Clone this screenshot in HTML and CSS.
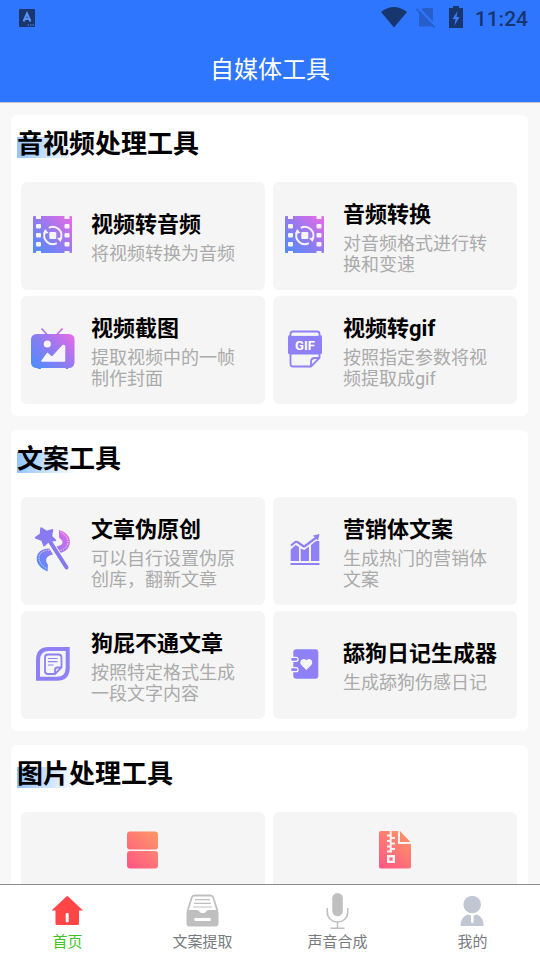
FILE: index.html
```html
<!DOCTYPE html>
<html lang="zh-CN">
<head>
<meta charset="utf-8">
<meta name="viewport" content="width=device-width, initial-scale=1">
<title>自媒体工具</title>
<link rel="stylesheet" href="styles.css">
</head>
<body>
<svg class="defs" aria-hidden="true">
  <defs>
    <linearGradient id="violet" x1="0" y1="44" x2="44" y2="0" gradientUnits="userSpaceOnUse">
      <stop offset="0.1" stop-color="#4d8dff"/>
      <stop offset="0.5" stop-color="#8f7bf0"/>
      <stop offset="0.9" stop-color="#e36be8"/>
    </linearGradient>
    <linearGradient id="coral" x1="6" y1="40" x2="38" y2="3" gradientUnits="userSpaceOnUse">
      <stop offset="0" stop-color="#ff5585"/>
      <stop offset="1" stop-color="#ff9a64"/>
    </linearGradient>
    <symbol id="film" viewBox="0 0 44 44">
      <rect x="3" y="2" width="39" height="37" rx="1" fill="url(#violet)"/>
      <g fill="#f5f5f5">
        <rect x="6" y="2" width="5" height="3"/><rect x="6" y="10" width="5" height="4.5" rx="1"/><rect x="6" y="19" width="5" height="4.5" rx="1"/><rect x="6" y="28" width="5" height="4.5" rx="1"/><rect x="6" y="37" width="5" height="2"/>
        <rect x="34.500" y="2" width="5" height="3"/><rect x="34.500" y="10" width="5" height="4.5" rx="1"/><rect x="34.500" y="19" width="5" height="4.5" rx="1"/><rect x="34.500" y="28" width="5" height="4.500" rx="1"/><rect x="34.500" y="37" width="5" height="2"/>
        <rect x="19.300" y="18" width="7" height="7" rx="1"/>
        <path d="M13 20l2-5 3.500 4zM32.500 23.500l-2 4.500-3.500-4z"/>
      </g>
      <path d="M26.800 29.200A8.600 8.600 0 0 1 14.800 18.500M18.800 13.800A8.600 8.600 0 0 1 30.800 24.500" fill="none" stroke="#f5f5f5" stroke-width="1.900"/>
    </symbol>
  </defs>
</svg>

<header class="header">
  <div class="status">
    <svg class="status-app" viewBox="0 -3 16 22"><rect width="16" height="18" rx="1" fill="#19366f"/><path d="M4.500 12.500L8 4.500l3.500 8M6 10h4" fill="none" stroke="#5c92f5" stroke-width="2"/><path d="M8.500 16h1.500m1 0h1.500m1 0H15" stroke="#5c92f5" stroke-width="1.200"/></svg>
    <svg class="status-wifi" viewBox="0 0 26 22"><path d="M0 6Q13-4 26 6L13 21.500z" fill="#17366f"/></svg>
    <svg class="status-sim" viewBox="0 0 20 22"><path d="M7 2h10v18.500H3V6z" fill="#265fcb"/><path d="M1 1l18 19" stroke="#2f76ff" stroke-width="3"/><path d="M.5 3L18.500 21.500" stroke="#265fcb" stroke-width="1.800"/></svg>
    <svg class="status-battery" viewBox="0 0 14 22"><path d="M4 0h6v2h4v20H0V2h4z" fill="#17366f"/><path d="M8.500 5L3.500 13h3L5.500 19.500l5-8.500h-3z" fill="#3b7dff"/></svg>
    <time class="clock">11:24</time>
  </div>
  <h1 class="title">自媒体工具</h1>
</header>

<main class="content">
  <section class="card">
    <h2 class="card-title">音视频处理工具</h2>
    <div class="grid">
      <a class="tile" href="#video-audio">
        <svg class="icon"><use href="#film"/></svg>
        <span class="text"><strong class="name">视频转音频</strong><span class="desc">将视频转换为音频</span></span>
      </a>
      <a class="tile" href="#audio-convert">
        <svg class="icon"><use href="#film"/></svg>
        <span class="text"><strong class="name">音频转换</strong><span class="desc">对音频格式进行转换和变速</span></span>
      </a>
      <a class="tile" href="#video-shot">
        <svg class="icon" viewBox="0 0 44 44"><g stroke="url(#violet)" stroke-width="1.800" fill="none"><path d="M11.500.5L18 7.500M32.500.5L26 7.500"/></g><rect x="1" y="6" width="43.500" height="34" rx="5.500" fill="url(#violet)"/><path d="M7 39h4v2H8zM35 39h4l-1 2h-2z" fill="url(#violet)"/><circle cx="17.300" cy="16" r="3.600" fill="#f7f5fb"/><path d="M12 33l5.500-7.500 4.500 4L33 17.500l1.500.5V33z" fill="#f7f5fb" stroke="#f7f5fb" stroke-width="1.500" stroke-linejoin="round"/></svg>
        <span class="text"><strong class="name">视频截图</strong><span class="desc">提取视频中的一帧制作封面</span></span>
      </a>
      <a class="tile" href="#video-gif">
        <svg class="icon" viewBox="0 0 44 44"><path d="M8.500 9V6q0-2.500 2.500-2.500h24q2.500 0 2.500 2.500v3M8.500 25v11q0 2.500 2.500 2.500h18L37.500 30v-5M29 38v-4q0-4 4-4h4" fill="none" stroke="#8f80f8" stroke-width="1.800"/><rect x="6" y="7" width="34" height="19.500" rx="2" fill="#8f80f8"/><path d="M9.500 7.300h27" stroke="#f5f5f5" stroke-width="1.200"/><text class="gif-label" x="23" y="22">GIF</text></svg>
        <span class="text"><strong class="name">视频转gif</strong><span class="desc">按照指定参数将视频提取成gif</span></span>
      </a>
    </div>
  </section>

  <section class="card">
    <h2 class="card-title">文案工具</h2>
    <div class="grid">
      <a class="tile" href="#rewrite">
        <svg class="icon" viewBox="0 0 44 44"><path d="M29 1C37 3 41 9 39.700 15 38.500 20.500 34 23.500 28.500 24L26 17.500C33 16.500 35 13 29 8.500zM19.500 19.500l3.500 6C17 26.500 14 30 18 36L17.500 42.500C8 38.500 4.500 31 8 24.500q3.500-5 11.500-5z" fill="url(#violet)"/><path d="M30.500 3q8 4.500 7.500 10.500-1 7-10 8.500M19.500 21.200q-8.500 0-10.300 6-1.200 6.500 7.300 12.500" fill="none" stroke="#f5f5f5" stroke-width=".9" stroke-dasharray="1.200 1.200"/><path d="M20 12.500l17 27" stroke="#f5f5f5" stroke-width="6"/><path d="M19 11l17.500 27.500" stroke="#8878ed" stroke-width="4" stroke-linecap="round"/><path d="M11-1l5.500 3.500L22.500.7l-1 6.500 4 4-6.500 1-5 4.500-2-5.500L5.500 8.700 10.500 5z" fill="#897af0" stroke="#897af0" stroke-width="1.500" stroke-linejoin="round"/></svg>
        <span class="text"><strong class="name">文章伪原创</strong><span class="desc">可以自行设置伪原创库，翻新文章</span></span>
      </a>
      <a class="tile" href="#marketing">
        <svg class="icon" viewBox="0 0 44 44"><path d="M8.700 32V20.500l5-4.500 3.300 2V32zM18.700 32V19.500l3.500 1.500 4.800-3.500V32zM29 32V16l5-4h3.300v20zM8.500 34H37.500v2h-29z" fill="#8f80f8"/><path d="M9 16.500l4.500-3.500q1-.5 2 0l5.500 4q1 .7 2 0L35 8" fill="none" stroke="#f5f5f5" stroke-width="4"/><path d="M9 16.500l4.500-3.500q1-.5 2 0l5.500 4q1 .7 2 0L35 8" fill="none" stroke="#8f80f8" stroke-width="2.200"/><path d="M31 6.500l6.500-1.500-1.500 6.500z" fill="#8f80f8"/></svg>
        <span class="text"><strong class="name">营销体文案</strong><span class="desc">生成热门的营销体文案</span></span>
      </a>
      <a class="tile" href="#essay">
        <svg class="icon" viewBox="0 0 44 44"><path d="M8 35.700V17Q8 6 19 6h18.700v18.700q0 11-11 11z" fill="none" stroke="#8f80f8" stroke-width="4"/><path d="M18 11.500h10.500q3 0 3 3V24.500l-6.500 6.500h-7q-3 0-3-3V14.500q0-3 3-3zM25 31v-4q0-2.500 2.500-2.500h4" fill="none" stroke="#8f80f8" stroke-width="1.800"/><path d="M18 15.500h9.500M18 18.700h9.500M18 22h5.500" stroke="#8f80f8" stroke-width="1.200"/></svg>
        <span class="text"><strong class="name">狗屁不通文章</strong><span class="desc">按照特定格式生成一段文字内容</span></span>
      </a>
      <a class="tile" href="#diary">
        <svg class="icon" viewBox="0 0 44 44"><rect x="11.300" y="6.300" width="25" height="29.500" rx="3" fill="#8f80f8"/><g fill="#8f80f8" stroke="#f5f5f5" stroke-width="1.300"><rect x="8.500" y="14.300" width="7.500" height="4" rx="2"/><rect x="8.500" y="24.700" width="7.500" height="4" rx="2"/></g><path d="M24.300 27l-5-5c-3-3.300 1.500-8.500 5-4.700 3.500-3.800 8 1.400 5 4.700z" fill="#f5f5f5"/></svg>
        <span class="text"><strong class="name">舔狗日记生成器</strong><span class="desc">生成舔狗伤感日记</span></span>
      </a>
    </div>
  </section>

  <section class="card">
    <h2 class="card-title">图片处理工具</h2>
    <div class="grid">
      <a class="tile tile-stacked" href="#image-join">
        <svg class="icon" viewBox="0 0 44 44"><rect x="6" y="3.500" width="31" height="18" rx="3" fill="url(#coral)"/><rect x="6" y="23" width="31" height="17.500" rx="3" fill="url(#coral)"/></svg>
      </a>
      <a class="tile tile-stacked" href="#image-zip">
        <svg class="icon" viewBox="0 0 44 44"><path d="M8 3h17v13h13v22.500q0 2-2 2H8q-2 0-2-2V5q0-2 2-2zM27 3l10.500 11H27z" fill="url(#coral)"/><path d="M17.700 3v21M14 7.500h4M18 10h4M14 13h4M18 15.500h4M14 18.500h4M18 21h4M14 23.500h5" stroke="#f5f5f5" stroke-width="1.900"/><rect x="15.200" y="28.200" width="5.600" height="5.600" fill="none" stroke="#f5f5f5" stroke-width="2.400"/></svg>
      </a>
    </div>
  </section>
</main>

<nav class="tabs">
  <a class="tab tab-active" href="#home">
    <svg class="tab-icon" viewBox="0 0 36 36"><path d="M17.300 2.700L33 17.500h-4V30.500q0 1.500-1.500 1.500H7q-1.500 0-1.500-1.500V17.500h-4z" fill="#ff4545"/><rect x="15.700" y="20" width="3" height="9.300" rx="1" fill="#fff"/></svg>
    首页
  </a>
  <a class="tab" href="#extract">
    <svg class="tab-icon" viewBox="0 0 36 36"><path d="M2.500 18L6.800 4.500q.7-2 2.700-2h16q2 0 2.700 2L32.500 18" fill="none" stroke="#bfbfbf" stroke-width="1.800"/><path d="M10 6.700h15M9 10.300h17M8 14h19" stroke="#bfbfbf" stroke-width="1.200"/><path d="M3.500 17H12q1.500 0 2.500 1.500t2 1.500h2.500q1 0 2-1.500T23.500 17h8q2 1 2 3v10.500q0 3-3 3h-26q-3 0-3-3V20q0-2 2-3z" fill="#bfbfbf"/><rect x="9.300" y="25" width="16.500" height="3" rx="1" fill="#fff"/></svg>
    文案提取
  </a>
  <a class="tab" href="#voice">
    <svg class="tab-icon" viewBox="0 0 36 36"><rect x="12.300" y="0" width="10.500" height="23.300" rx="5.200" fill="#bfbfbf"/><path d="M7.300 15v4.500a10.200 9.500 0 0 0 20.400 0V15M17.500 29v6M10.500 35.200h14" fill="none" stroke="#bfbfbf" stroke-width="1.500"/></svg>
    声音合成
  </a>
  <a class="tab" href="#me">
    <svg class="tab-icon" viewBox="0 0 36 36"><circle cx="17.200" cy="11.500" r="8.800" fill="#c0c7d3"/><path d="M5.500 33q0-8.500 7-11.500 5 2 9.500 0 6.700 3 6.700 11.500z" fill="#c0c7d3"/><path d="M16 22h2.600v7l-1.300 1.300L16 29z" fill="#fff"/></svg>
    我的
  </a>
</nav>
</body>
</html>
```
FILE: styles.css
```css
* {
  box-sizing: border-box;
}

body {
  display: flex;
  flex-direction: column;
  height: 100vh;
  margin: 0;
  background: #f8f8f8;
  font-family: Roboto, "Noto Sans CJK SC", sans-serif;
}

a {
  color: inherit;
  text-decoration: none;
}

svg {
  display: block;
  flex: none;
}

.defs {
  position: absolute;
  width: 0;
  height: 0;
}

.header {
  flex: none;
  background: #2f76ff;
  border-bottom: 1px solid #c4c6ca;
}

.status {
  display: flex;
  align-items: flex-start;
  padding: 6px 12px 6px 19px;
}

.status-app {
  width: 16px;
  height: 22px;
  margin-right: auto;
}

.status-wifi {
  width: 26px;
  height: 22px;
}

.status-sim {
  width: 20px;
  height: 22px;
  margin-left: 9px;
}

.status-battery {
  width: 14px;
  height: 22px;
  margin: 0 12px 0 13px;
}

.clock {
  color: #17366f;
  font-size: 21px;
  font-weight: 500;
  line-height: 26px;
}

.title {
  margin: 0;
  color: #fff;
  font-size: 24px;
  font-weight: 400;
  line-height: 64px;
  text-align: center;
}

.content {
  display: flex;
  flex: 1;
  flex-direction: column;
  gap: 14px;
  min-height: 0;
  padding: 12px 12px 0 11px;
  overflow-y: auto;
  scrollbar-width: none;
}

.card {
  flex: none;
  padding: 0 11px 12px 10px;
  background: #fff;
  border-radius: 6px;
}

.card-title {
  width: fit-content;
  margin: 0 0 8px -4px;
  background: linear-gradient(90deg, #93c4fc, #fff) 0 22px / 60px 21px no-repeat;
  color: #000;
  font-size: 26px;
  font-weight: 700;
  line-height: 59px;
}

.grid {
  display: grid;
  grid-template-columns: 1fr 1fr;
  gap: 6px 8px;
}

.tile {
  display: flex;
  align-items: center;
  gap: 17px;
  min-height: 108px;
  padding: 0 20px 0 9px;
  background: #f5f5f5;
  border-radius: 6px;
}

.tile-stacked {
  flex-direction: column;
  padding: 16px 0 0;
}

.icon {
  width: 44px;
  height: 44px;
  overflow: visible;
}

.gif-label {
  fill: #fff;
  font-size: 13px;
  font-weight: 700;
  text-anchor: middle;
}

.text {
  display: flex;
  flex: 1;
  flex-direction: column;
  gap: 2px;
  min-width: 0;
}

.name {
  color: #000;
  font-size: 22px;
  font-weight: 700;
  line-height: 33px;
}

.desc {
  color: #aaa;
  font-size: 18px;
  line-height: 21px;
}

.tabs {
  display: grid;
  flex: none;
  grid-template-columns: repeat(4, 1fr);
  background: #fff;
  border-top: 1px solid #8c8c8c;
}

.tab {
  display: flex;
  flex-direction: column;
  align-items: center;
  gap: 3px;
  padding: 8px 0;
  color: #777b80;
  font-size: 15px;
  line-height: 20px;
}

.tab-active {
  color: #3cc51f;
}

.tab-icon {
  width: 36px;
  height: 36px;
}
```
